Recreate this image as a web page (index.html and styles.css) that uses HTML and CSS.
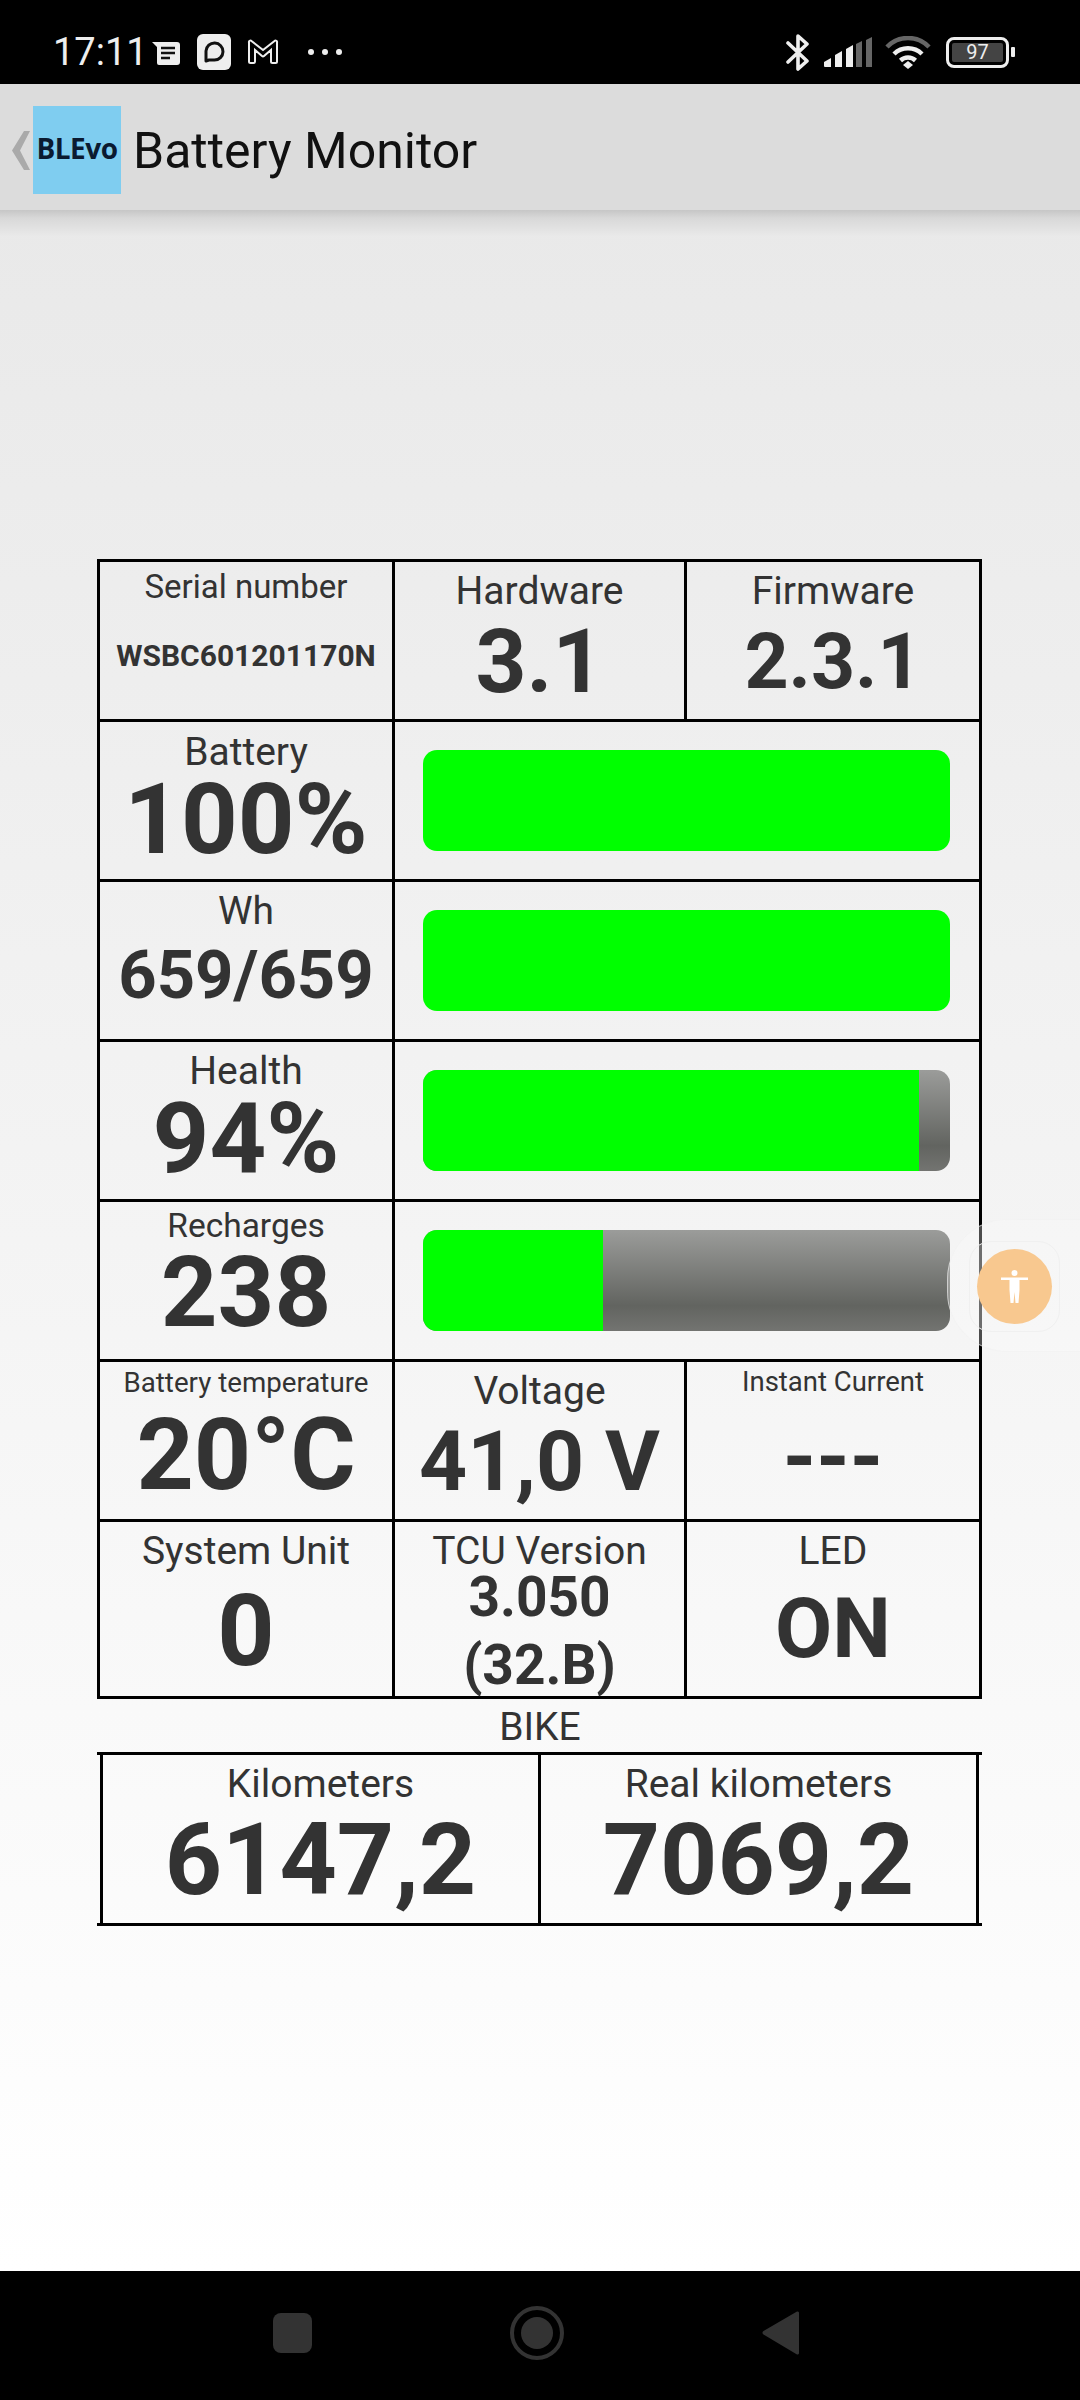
FILE: index.html
```html
<!DOCTYPE html>
<html lang="en">
<head>
    <meta charset="UTF-8">
    <meta name="viewport" content="width=device-width, initial-scale=1.0">
    <title>Battery Monitor</title>
    <link rel="stylesheet" href="styles.css">
</head>
<body>
    <div class="status-bar">
        <span class="time">17:11</span>
        <svg class="ic-note" viewBox="0 0 28 24"><path d="M0 1h25a3 3 0 0 1 3 3v17a3 3 0 0 1-3 3H7a2 2 0 0 1-2-2V6z" fill="#eee"/><path d="M9 7h14M9 12h14M9 17h9" stroke="#111" stroke-width="2.6"/></svg>
        <svg class="ic-app" viewBox="0 0 34 36"><rect width="34" height="36" rx="6" fill="#eee"/><path d="M9 27V17a8.5 8.5 0 1 1 8.5 9H12z" fill="none" stroke="#111" stroke-width="3" stroke-linejoin="round"/></svg>
        <svg class="ic-mail" viewBox="0 0 32 26"><path d="M2 3.5v19a1.5 1.500 0 0 0 1.500 1.500h3a1.500 1.500 0 0 0 1.500-1.500V11l7 6a1.500 1.500 0 0 0 2 0l7-6v11.500a1.500 1.500 0 0 0 1.500 1.500h3a1.500 1.500 0 0 0 1.500-1.500v-19A1.500 1.500 0 0 0 27.500 2L16 11 4.500 2A1.500 1.500 0 0 0 2 3.500z" fill="none" stroke="#eee" stroke-width="2"/></svg>
        <svg class="ic-dots" viewBox="0 0 34 8"><circle cx="3" cy="4" r="3" fill="#eee"/><circle cx="17" cy="4" r="3" fill="#eee"/><circle cx="31" cy="4" r="3" fill="#eee"/></svg>
        <span class="spacer"></span>
        <svg class="ic-bt" viewBox="0 0 24 39"><path d="M2 10l19 18-9 8V3l9 8L2 29" fill="none" stroke="#eee" stroke-width="3.600" stroke-linejoin="round" stroke-linecap="round"/></svg>
        <svg class="ic-signal" viewBox="0 0 48 30"><path d="M0 25l7-4v9H1a1 1 0 0 1-1-1z" fill="#eee"/><path d="M11 18l7-4v16h-7z" fill="#eee"/><path d="M22 12l7-4v22h-7z" fill="#eee"/><path d="M32 7l6-3v26h-6z" fill="#666"/><path d="M42 3l6-3v30h-6z" fill="#666"/></svg>
        <svg class="ic-wifi" viewBox="0 0 46 33"><path d="M2 11a29 29 0 0 1 42 0" fill="none" stroke="#666" stroke-width="4.500"/><path d="M9 18a20 20 0 0 1 28 0" fill="none" stroke="#eee" stroke-width="4.500"/><path d="M15.500 24.500a11 11 0 0 1 15 0" fill="none" stroke="#eee" stroke-width="4.500"/><path d="M18 29l5-4 5 4-5 4z" fill="#eee"/></svg>
        <div class="battery"><div class="battery-body"><span class="battery-level">97</span></div><div class="battery-tip"></div></div>
    </div>

    <div class="app-bar">
        <svg class="back" viewBox="0 0 18 39"><path d="M18 0H12L0 19.500 12 39h6L8 19.500z" fill="#aaa"/></svg>
        <div class="logo">BLEvo</div>
        <span class="title">Battery Monitor</span>
    </div>

    <div class="content">
        <div class="panel">
            <div class="cell c-serial"><div class="label">Serial number</div><div class="value">WSBC601201170N</div></div>
            <div class="cell c-hw"><div class="label">Hardware</div><div class="value">3.1</div></div>
            <div class="cell c-fw"><div class="label">Firmware</div><div class="value">2.3.1</div></div>

            <div class="cell c-battery"><div class="label">Battery</div><div class="value">100%</div></div>
            <div class="cell bar-cell"><div class="bar"><div class="fill" style="width: 100%"></div></div></div>

            <div class="cell c-wh"><div class="label">Wh</div><div class="value">659/659</div></div>
            <div class="cell bar-cell"><div class="bar"><div class="fill" style="width: 100%"></div></div></div>

            <div class="cell c-health"><div class="label">Health</div><div class="value">94%</div></div>
            <div class="cell bar-cell"><div class="bar"><div class="fill" style="width: 94.100%"></div></div></div>

            <div class="cell c-recharges"><div class="label">Recharges</div><div class="value">238</div></div>
            <div class="cell bar-cell"><div class="bar"><div class="fill" style="width: 34.200%"></div></div></div>

            <div class="cell c-temp"><div class="label">Battery temperature</div><div class="value">20°C</div></div>
            <div class="cell c-volt"><div class="label">Voltage</div><div class="value">41,0 V</div></div>
            <div class="cell c-current"><div class="label">Instant Current</div><div class="value">---</div></div>

            <div class="cell c-system"><div class="label">System Unit</div><div class="value">0</div></div>
            <div class="cell c-tcu"><div class="label">TCU Version</div><div class="value">3.050<br>(32.B)</div></div>
            <div class="cell c-led"><div class="label">LED</div><div class="value">ON</div></div>
        </div>

        <div class="bike-title">BIKE</div>

        <div class="bike-panel">
            <div class="bike-cell"><div class="label">Kilometers</div><div class="value">6147,2</div></div>
            <div class="bike-cell"><div class="label">Real kilometers</div><div class="value">7069,2</div></div>
        </div>

        <div class="float-btn">
            <div class="float-inner">
                <div class="float-circle">
                    <svg viewBox="0 0 27 33"><circle cx="13.500" cy="3" r="3" fill="#fff"/><path d="M0 7.500h27v2.500h-8.500v10l-1 13h-3l-1-11-1 11h-3l-1-13V10H0z" fill="#fff"/></svg>
                </div>
            </div>
        </div>
    </div>

    <div class="nav-bar">
        <div class="nav-square"></div>
        <div class="nav-circle"><div class="nav-dot"></div></div>
        <svg class="nav-back" viewBox="0 0 37 46"><path d="M35 1.500L1.500 21a2 2 0 0 0 0 3.500L35 44.500a1.500 1.500 0 0 0 2-1.500V3a1.500 1.500 0 0 0-2-1.500z" fill="#333"/></svg>
    </div>
</body>
</html>
```

FILE: styles.css
```css
* {
    box-sizing: border-box;
}
body {
    margin: 0;
    width: 1080px;
    height: 2400px;
    display: flex;
    flex-direction: column;
    font-family: Roboto, "Liberation Sans", sans-serif;
    color: #333;
    overflow: hidden;
}

/* status bar */
.status-bar {
    height: 84px;
    background: #000;
    display: flex;
    align-items: center;
    padding: 20px 65px 0 53px;
    color: #eee;
}
.time {
    font-size: 38px;
    width: 99px;
}
.ic-note { width: 28px; height: 24px; margin-top: 2px; }
.ic-app { width: 34px; height: 36px; margin-left: 17px; }
.ic-mail { width: 32px; height: 26px; margin-left: 16px; }
.ic-dots { width: 34px; height: 8px; margin-left: 29px; }
.spacer { flex: 1; }
.ic-bt { width: 24px; height: 39px; }
.ic-signal { width: 48px; height: 30px; margin-left: 14px; }
.ic-wifi { width: 46px; height: 33px; margin-left: 13px; }
.battery {
    display: flex;
    align-items: center;
    margin-left: 15px;
}
.battery-body {
    width: 63px;
    height: 31px;
    border: 3px solid #eee;
    border-radius: 8px;
    padding: 3px;
}
.battery-level {
    display: block;
    height: 19px;
    background: #444;
    border-radius: 2px;
    font-size: 20px;
    line-height: 19px;
    text-align: center;
    color: #eee;
}
.battery-tip {
    width: 4px;
    height: 10px;
    margin-left: 2px;
    background: #eee;
    border-radius: 1px;
}

/* app bar */
.app-bar {
    height: 126px;
    background: #dcdcdc;
    display: flex;
    align-items: center;
    padding: 6px 0 0 12px;
}
.back {
    width: 18px;
    height: 39px;
}
.logo {
    width: 88px;
    height: 88px;
    margin-left: 3px;
    background: #7fcdf0;
    color: #0b1a30;
    font-family: "Open Sans", sans-serif;
    font-weight: 700;
    font-size: 28px;
    line-height: 84px;
    text-align: center;
    letter-spacing: -0.5px;
}
.title {
    margin: 2px 0 0 12px;
    font-size: 50px;
    color: #111;
}

/* main area */
.content {
    position: relative;
    flex: 1;
    padding: 349px 97px 0;
    background:
        linear-gradient(#c6c6c6, #d8d8d8 8px, #e9e9e9 26px) 0 0 / 100% 26px no-repeat,
        linear-gradient(#e9e9e9, #fff);
}
.panel {
    display: grid;
    width: 885px;
    grid-template-columns: 295px 292px 295px;
    grid-template-rows: repeat(6, 160px) 177px;
    border-right: 3px solid #000;
    border-bottom: 3px solid #000;
}
.cell {
    border-top: 3px solid #000;
    border-left: 3px solid #000;
    text-align: center;
}
.label {
    height: 44px;
    margin-top: 7px;
    font-size: 39px;
    line-height: 44px;
    white-space: nowrap;
}
.value {
    font-weight: 700;
    line-height: 80px;
    font-size: 100px;
    white-space: nowrap;
}

/* every cell has its own text sizes, they shrink to fit in the app */
.c-serial .label { margin-top: 3px; font-size: 33px; }
.c-serial .value { margin-top: 7px; font-size: 30px; }
.c-hw .value { margin-top: 9px; font-size: 89px; }
.c-fw .value { margin-top: 9px; font-size: 77px; }
.c-battery .label { margin-top: 8px; }
.c-battery .value { margin-top: 5px; font-size: 99px; }
.c-wh .value { margin-top: 2px; font-size: 67px; }
.c-health .value { margin-top: 5px; font-size: 99px; }
.c-recharges .label { margin-top: 2px; font-size: 33.500px; }
.c-recharges .value { margin-top: 4px; font-size: 99px; }
.c-temp .label { margin-top: -1px; font-size: 27.700px; }
.c-temp .value { margin-top: 10px; }
.c-volt .value { margin-top: 9px; font-size: 84px; }
.c-current .label { margin-top: -2px; font-size: 27.500px; }
.c-current .value { margin-top: 13px; font-size: 85px; }
.c-system .value { margin-top: 18px; }
.c-tcu .value { margin-top: -10px; font-size: 55px; line-height: 68px; }
.c-led .value { margin-top: 16px; font-size: 83px; }

.bar-cell {
    grid-column: span 2;
    padding: 28px 29px 0 28px;
}
.bar {
    height: 101px;
    border-radius: 14px;
    overflow: hidden;
    background: linear-gradient(#9b9c9a, #626460 75%, #737471);
}
.fill {
    height: 100%;
    background: #0f0;
}

.bike-title {
    height: 53px;
    font-size: 39px;
    line-height: 56px;
    text-align: center;
}
.bike-panel {
    display: grid;
    width: 885px;
    height: 174px;
    grid-template-columns: 438px 1fr;
    border-top: 3px solid #000;
    border-bottom: 3px solid #000;
    padding: 0 3px;
}
.bike-cell {
    border-left: 3px solid #000;
    text-align: center;
}
.bike-cell:last-child {
    border-right: 3px solid #000;
}
.bike-cell .value { margin-top: 14px; }

/* accessibility button on top of the page */
.float-btn {
    position: absolute;
    left: 947px;
    top: 1009px;
    width: 133px;
    height: 133px;
    padding: 21px 0 0 21px;
    background: rgba(252, 252, 252, 0.3);
    border: 1px solid rgba(240, 240, 240, 0.6);
    border-right: none;
    border-radius: 60px 0 0 60px;
}
.float-inner {
    width: 91px;
    height: 91px;
    padding: 7px;
    background: rgba(250, 250, 250, 0.2);
    border: 1px solid #f0f0f0;
    border-radius: 22px;
}
.float-circle {
    width: 75px;
    height: 75px;
    border-radius: 50%;
    background: #f8c88f;
    display: flex;
    align-items: center;
    justify-content: center;
}
.float-circle svg {
    width: 27px;
    height: 33px;
}

/* navigation bar */
.nav-bar {
    height: 129px;
    background: #000;
    display: flex;
    align-items: center;
    padding: 0 0 6px 273px;
    gap: 198px;
}
.nav-square {
    width: 39px;
    height: 40px;
    background: #333;
    border-radius: 8px;
}
.nav-circle {
    width: 54px;
    height: 54px;
    border: 4px solid #333;
    border-radius: 50%;
    padding: 7px;
}
.nav-dot {
    width: 100%;
    height: 100%;
    background: #333;
    border-radius: 50%;
}
.nav-back {
    width: 37px;
    height: 46px;
}
```
